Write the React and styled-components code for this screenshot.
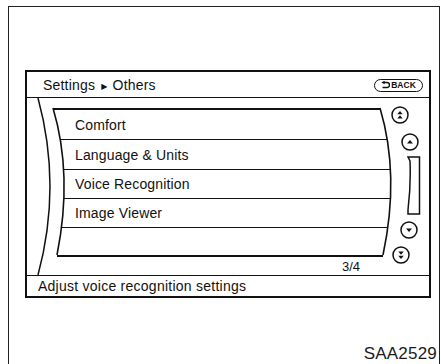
import React from "react";
import styled, { createGlobalStyle } from "styled-components";

const Global = createGlobalStyle`
  html, body { margin: 0; padding: 0; background: #fff; }
  body { font-family: "Liberation Sans", Arial, sans-serif; color: #111; overflow: hidden; }
`;

const Frame = styled.div`
  margin: 6px 0 0 8px;
  width: 430px;
  height: 357px;
  border: 1px solid #222;
  border-bottom: none;
  display: flex;
  flex-direction: column;
`;

const Screen = styled.div`
  margin: 63px 0 0 16px;
  width: 402px;
  height: 224px;
  border: 2px solid #111;
  display: flex;
  flex-direction: column;
  flex-shrink: 0;
`;

const Header = styled.div`
  height: 25px;
  border-bottom: 1px solid #111;
  display: flex;
  align-items: center;
  justify-content: space-between;
  padding: 0 6px 0 16px;
  font-size: 14px;
`;

const Crumb = styled.span`
  letter-spacing: 0.2px;
  & b {
    font-family: "DejaVu Sans", sans-serif;
    font-weight: normal;
    font-size: 8px;
    margin: 0 5px 0 6px;
    position: relative;
    top: -1px;
  }
`;

const BackPill = styled.div`
  width: 47px;
  height: 11px;
  border: 1.5px solid #111;
  border-radius: 7px;
  display: flex;
  align-items: center;
  justify-content: center;
  gap: 1px;
  font-size: 8.5px;
  font-weight: bold;
  margin-top: 1px;
`;

const Body = styled.div`
  position: relative;
  height: 177px;
  display: flex;
  flex-shrink: 0;
`;

const Overlay = styled.svg`
  position: absolute;
  left: 0;
  top: 0;
  width: 402px;
  height: 177px;
  pointer-events: none;
`;

const ListArea = styled.div`
  width: 365px;
  flex-shrink: 0;
  display: flex;
  flex-direction: column;
  padding-top: 10px;
`;

const ListTop = styled.div`
  margin-left: 26px;
  width: 327px;
  height: 1.5px;
  background: #111;
`;

const Row = styled.div`
  box-sizing: border-box;
  height: ${(p) => p.$h}px;
  margin-left: ${(p) => p.$left}px;
  width: ${(p) => p.$right - p.$left}px;
  padding-left: ${(p) => 48 - p.$left}px;
  border-bottom: ${(p) => (p.$last ? 2 : 1.5)}px solid #111;
  display: flex;
  align-items: center;
  font-size: 14px;
  letter-spacing: 0.15px;
  padding-top: 1px;
`;

const Pager = styled.div`
  flex: 1;
  display: flex;
  align-items: center;
  justify-content: flex-end;
  padding-right: 32px;
  font-size: 13px;
  padding-top: 1px;
`;

const ScrollCol = styled.div`
  width: 37px;
  flex-shrink: 0;
  display: flex;
  flex-direction: column;
  padding-top: 8px;
`;

const ScrollItem = styled.div`
  flex-shrink: 0;
  margin-left: ${(p) => p.$x}px;
  margin-top: ${(p) => p.$gap}px;
  width: ${(p) => p.$w}px;
  height: ${(p) => p.$h}px;
  display: flex;
  & > svg { flex-shrink: 0; }
`;

const Footer = styled.div`
  border-top: 1.5px solid #111;
  flex: 1;
  display: flex;
  align-items: center;
  padding-left: 11px;
  font-size: 14px;
  letter-spacing: 0.25px;
`;

const Code = styled.div`
  margin-top: 47px;
  align-self: flex-end;
  margin-right: 2px;
  font-size: 17px;
  line-height: 17px;
  letter-spacing: 0.2px;
  color: #1a1a1a;
`;

const rows = [
  { label: "Comfort", h: 30, left: 33, right: 360 },
  { label: "Language & Units", h: 30, left: 37, right: 363 },
  { label: "Voice Recognition", h: 29, left: 37, right: 363 },
  { label: "Image Viewer", h: 29, left: 34, right: 360 },
  { label: "", h: 29, left: 30, right: 356, last: true },
];

const Circle = ({ children }) => (
  <svg width="18" height="18" viewBox="0 0 18 18">
    <circle cx="9" cy="9" r="8" fill="none" stroke="#111" strokeWidth="1.5" />
    {children}
  </svg>
);

const BackArrow = () => (
  <svg width="9" height="8" viewBox="0 0 9 8">
    <path d="M3 1.5 H6 A2.5 2.5 0 0 1 6 6.5 H1.5" fill="none" stroke="#111" strokeWidth="1.4" />
    <path d="M0.3 1.5 L3.6 -0.3 L3.6 3.3 Z" fill="#111" />
  </svg>
);

export default function App() {
  return (
    <>
      <Global />
      <Frame>
        <Screen>
          <Header>
            <Crumb>
              Settings<b>▶</b>Others
            </Crumb>
            <BackPill>
              <BackArrow />
              BACK
            </BackPill>
          </Header>
          <Body>
            <ListArea>
              <ListTop />
              {rows.map((r, i) => (
                <Row key={i} $h={r.h} $left={r.left} $right={r.right} $last={r.last}>
                  {r.label}
                </Row>
              ))}
              <Pager>3/4</Pager>
            </ListArea>
            <ScrollCol>
              <ScrollItem $x={-1} $gap={0} $w={18} $h={18}>
                <Circle>
                  <path d="M6.3 8.3 L9 5 L11.7 8.3 Z" fill="#111" />
                  <path d="M6.3 12.5 L9 9.2 L11.7 12.5 Z" fill="#111" />
                </Circle>
              </ScrollItem>
              <ScrollItem $x={9} $gap={9} $w={18} $h={18}>
                <Circle>
                  <path d="M6 10.5 L9 7 L12 10.5 Z" fill="#111" />
                </Circle>
              </ScrollItem>
              <ScrollItem $x={15} $gap={5} $w={14} $h={59}>
                <svg width="14" height="59" viewBox="0 0 14 59">
                  <path
                    d="M1 1 H12.5 V58 H1 V54 Q4 29 3 5 Z"
                    fill="none"
                    stroke="#111"
                    strokeWidth="1.5"
                  />
                </svg>
              </ScrollItem>
              <ScrollItem $x={8} $gap={6} $w={18} $h={18}>
                <Circle>
                  <path d="M6 7.5 L9 11 L12 7.5 Z" fill="#111" />
                </Circle>
              </ScrollItem>
              <ScrollItem $x={0} $gap={7} $w={18} $h={18}>
                <Circle>
                  <path d="M6.3 5.5 L9 8.8 L11.7 5.5 Z" fill="#111" />
                  <path d="M6.3 9.7 L9 13 L11.7 9.7 Z" fill="#111" />
                </Circle>
              </ScrollItem>
            </ScrollCol>
            <Overlay viewBox="0 0 402 177">
              <path d="M11 0 Q35 88 11 177" fill="none" stroke="#111" strokeWidth="1.5" />
              <path d="M26 10 Q46 77 30 157" fill="none" stroke="#111" strokeWidth="1.6" />
              <path d="M353 10 Q373 77 356 157" fill="none" stroke="#111" strokeWidth="1.6" />
            </Overlay>
          </Body>
          <Footer>Adjust voice recognition settings</Footer>
        </Screen>
        <Code>SAA2529</Code>
      </Frame>
    </>
  );
}
